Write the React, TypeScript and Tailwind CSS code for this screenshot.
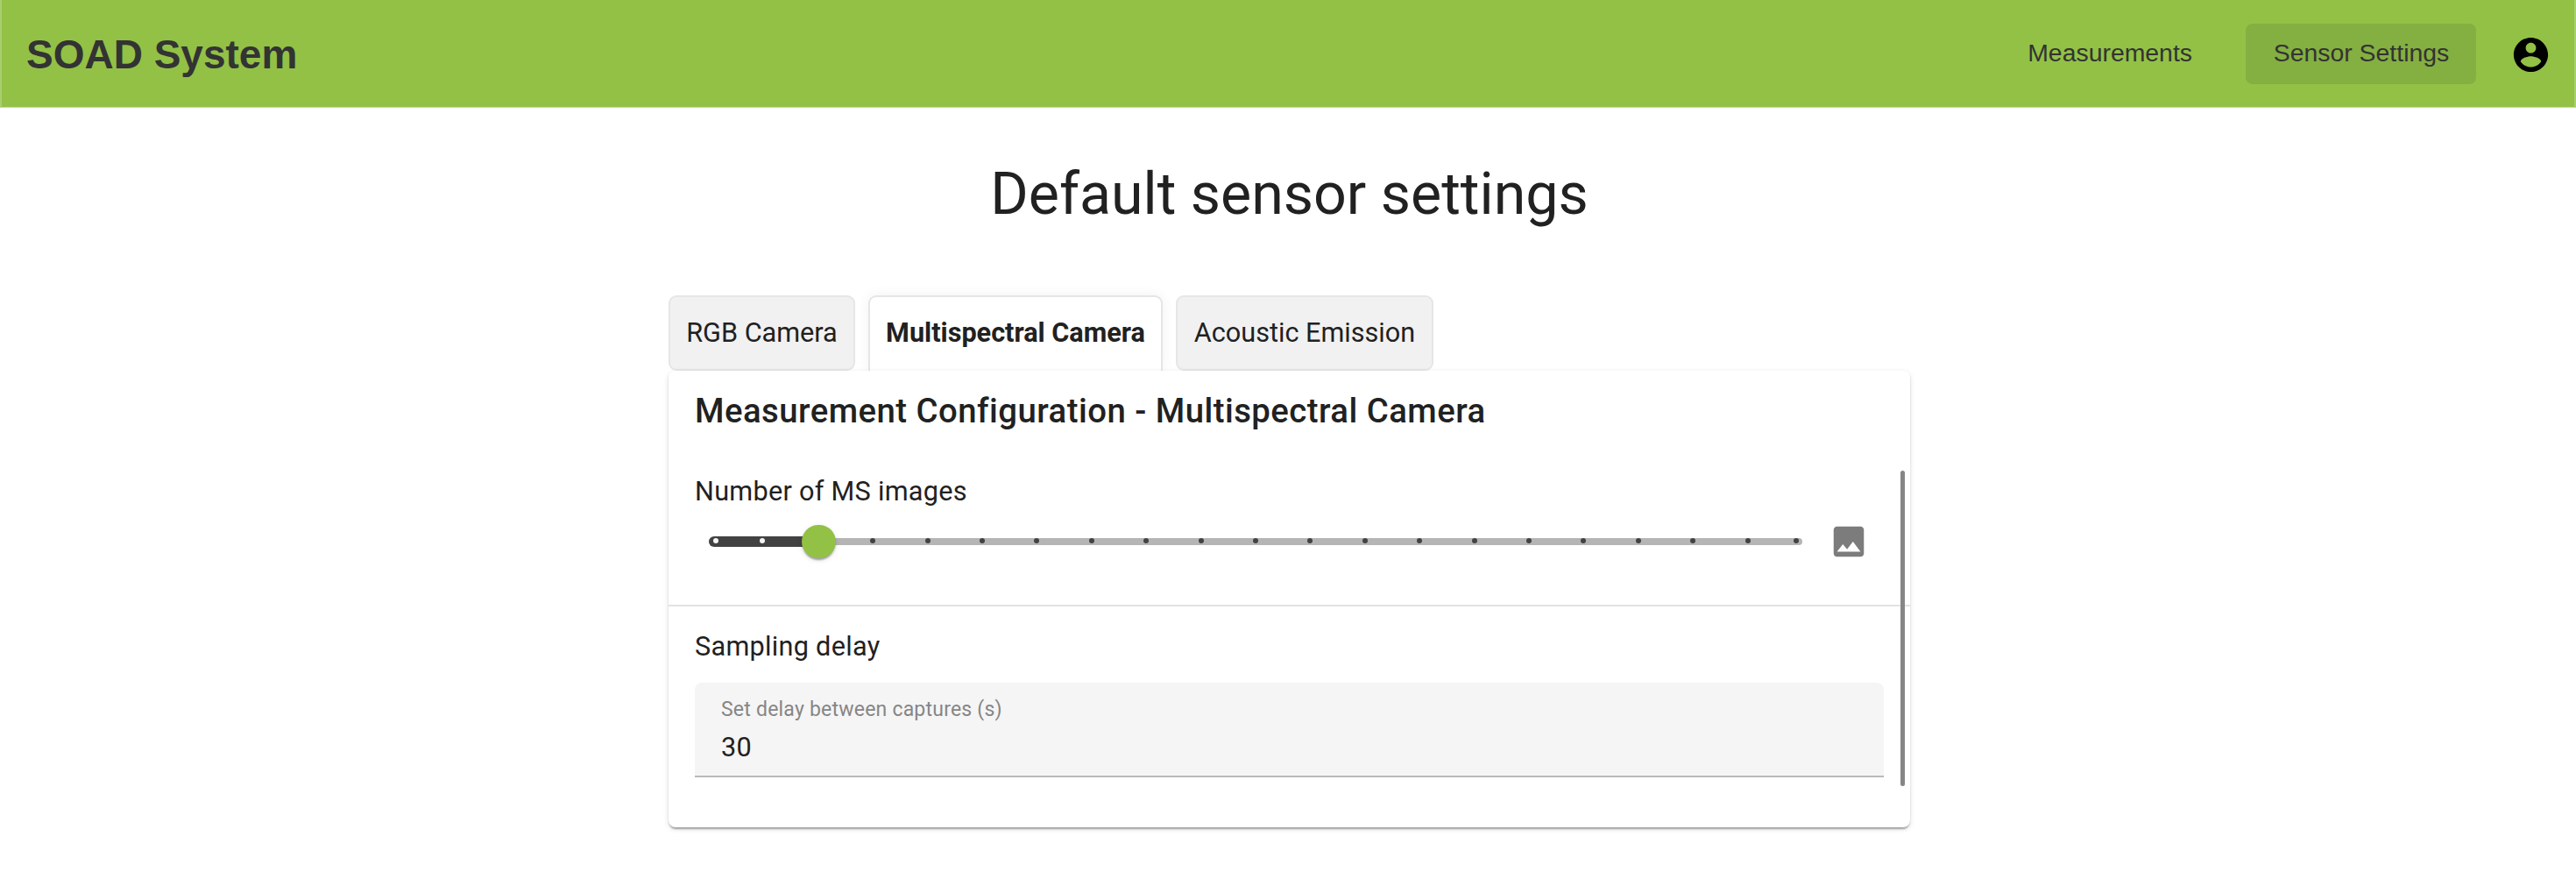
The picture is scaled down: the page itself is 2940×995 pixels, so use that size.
import React from 'react';

const TABS = [
  { label: 'RGB Camera', width: 'w-[213px]' },
  { label: 'Multispectral Camera', width: 'w-[336px]', active: true },
  { label: 'Acoustic Emission', width: 'w-[294px]' },
];

const STEPS = 20;
const VALUE = 2;
const TRACK_WIDTH = 1248;
const EDGE_INSET = 7.5;

function tickPosition(index: number) {
  if (index === 0) return EDGE_INSET;
  if (index === STEPS) return TRACK_WIDTH - EDGE_INSET;
  return (index * TRACK_WIDTH) / STEPS - (index === 1 ? 1 : 0);
}

function AccountIcon() {
  return (
    <svg viewBox="0 0 24 24" className="h-[47px] w-[47px] fill-black">
      <path d="M12 2C6.48 2 2 6.48 2 12s4.48 10 10 10 10-4.48 10-10S17.52 2 12 2zm0 3c1.66 0 3 1.34 3 3s-1.34 3-3 3-3-1.34-3-3 1.34-3 3-3zm0 14.2c-2.5 0-4.71-1.28-6-3.22.03-1.99 4-3.08 6-3.08 1.99 0 5.97 1.09 6 3.08-1.29 1.94-3.5 3.22-6 3.22z" />
    </svg>
  );
}

function ImageIcon() {
  return (
    <svg viewBox="0 0 24 24" className="h-[46px] w-[46px] shrink-0 fill-[#7c7c7c]">
      <path d="M21 19V5c0-1.1-.9-2-2-2H5c-1.1 0-2 .9-2 2v14c0 1.1.9 2 2 2h14c1.1 0 2-.9 2-2zM8.5 13.5l2.5 3.01L14.5 12l4.5 6H5l3.5-4.5z" />
    </svg>
  );
}

function Header() {
  return (
    <header className="flex h-[123px] items-center border-x-2 border-b border-[#a9cf6d] border-b-[#c4dea0] bg-[#92c146] pl-[28px] pr-[26px] font-['Liberation_Sans',Arial,sans-serif] text-[#333]">
      <h1 className="pt-[2px] text-[46px] leading-[52px] font-bold">SOAD System</h1>
      <nav className="ml-auto flex items-center text-[28.4px]">
        <a className="flex h-[69px] items-center px-[30px] pb-px">Measurements</a>
        <a className="ml-[31px] flex h-[69px] w-[263px] items-center justify-center rounded-[8px] bg-[#84af41] pb-px pl-px">
          Sensor Settings
        </a>
      </nav>
      <div className="ml-[39px] pt-[2px]">
        <AccountIcon />
      </div>
    </header>
  );
}

function Slider() {
  return (
    <div className="relative h-[40px] w-[1248px]">
      <div className="absolute top-[16px] left-0 h-[8px] w-full rounded-full bg-[#b5b5b5]" />
      <div className="absolute top-[14px] left-0 h-[11.5px] w-[125px] rounded-full bg-[#424242]" />
      {Array.from({ length: STEPS + 1 }, (_, i) => (
        <span
          key={i}
          className={`absolute top-[16px] -ml-[3px] h-[6px] w-[6px] rounded-full ${i < VALUE ? 'bg-[#f5f5f5]' : 'bg-[#424242]'}`}
          style={{ left: tickPosition(i) }}
        />
      ))}
      <div className="absolute top-[0.5px] left-[106px] h-[38.5px] w-[38.5px] rounded-full bg-[#92c146] shadow-[0_4px_2px_-2px_rgba(0,0,0,0.2),0_2px_2px_0_rgba(0,0,0,0.14),0_2px_6px_0_rgba(0,0,0,0.12)]" />
    </div>
  );
}

export default function App() {
  return (
    <div className="h-[995px] overflow-hidden bg-white font-[Roboto,sans-serif] text-[#212121]">
      <Header />
      <main className="flex flex-col items-center pl-[3px]">
        <h2 className="mt-[58px] h-[80px] text-[66.3px] leading-[80px] whitespace-nowrap">
          Default sensor settings
        </h2>
        <div className="mt-[76px] w-[1417px]">
          <div className="flex h-[86px] gap-[15px]">
            {TABS.map((tab) => (
              <div
                key={tab.label}
                className={`flex h-[86px] shrink-0 items-center justify-center border-2 border-[#e6e6e6] text-[30.64px] whitespace-nowrap ${tab.width} ${
                  tab.active
                    ? 'rounded-t-[9px] border-b-0 bg-white pb-[2px] font-bold shadow-[0_0_15px_rgba(0,0,0,0.06)]'
                    : 'rounded-[9px] bg-[#f1f1f1]'
                }`}
              >
                {tab.label}
              </div>
            ))}
          </div>
          <section className="relative h-[521px] rounded-[8px] bg-white shadow-[0_4px_2px_-2px_rgba(0,0,0,0.2),0_2px_2px_0_rgba(0,0,0,0.14),0_2px_6px_0_rgba(0,0,0,0.12)]">
            <h3 className="px-[30px] pt-[16px] text-[38.3px] leading-[60px] font-medium tracking-[0.0125em] whitespace-nowrap">
              Measurement Configuration - Multispectral Camera
            </h3>
            <div className="mt-[39px] h-[154px] border-b-2 border-[#e2e2e2] px-[30px]">
              <p className="text-[30.64px] leading-[46px] tracking-[0.0094em]">
                Number of MS images
              </p>
              <div className="mt-[11px] flex items-center pl-[16px]">
                <Slider />
                <div className="ml-[30px]">
                  <ImageIcon />
                </div>
              </div>
            </div>
            <div className="px-[30px] pt-[23px]">
              <p className="text-[30.64px] leading-[46px] tracking-[0.0094em]">Sampling delay</p>
              <div className="mt-[18px] h-[108px] rounded-t-[8px] border-b-2 border-[#bababa] bg-[#f5f5f5] px-[30px] pt-[16px]">
                <div className="text-[23px] leading-[30px] tracking-[0.0094em] text-[#868686]">
                  Set delay between captures (s)
                </div>
                <div className="mt-[10px] text-[30.64px] leading-[36px] tracking-[0.0094em]">
                  30
                </div>
              </div>
            </div>
            <div className="absolute top-[114px] right-[6px] h-[360px] w-[5px] rounded-full bg-[#868686]" />
          </section>
        </div>
      </main>
    </div>
  );
}
